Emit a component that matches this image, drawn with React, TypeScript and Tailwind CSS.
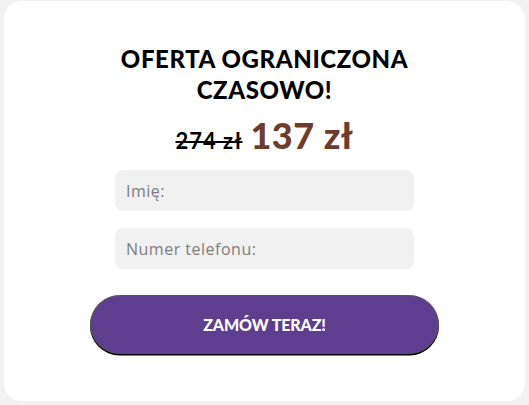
import React from 'react';

const App: React.FC = () => {
  return (
    <div className="w-[529px] h-[405px] bg-[#f2f2f2] flex flex-col" style={{ fontFamily: 'Lato, "Open Sans", sans-serif' }}>
      <div className="mx-[4px] mt-[1px] h-[400px] bg-white rounded-[18px] flex flex-col items-center">
        <h1 className="mt-[42px] w-[320px] text-center text-[24px] leading-[31px] font-black text-black tracking-[0.6px]">
          OFERTA OGRANICZONA CZASOWO!
        </h1>
        <div className="mt-[3px] flex items-baseline gap-[8px]">
          <span className="text-[22px] font-bold text-black line-through decoration-2 tracking-[1px]">274 zł</span>
          <span className="text-[36px] font-black text-[#6e3c2c] tracking-[0.5px]">137 zł</span>
        </div>
        <div className="mt-[8px] w-[299px] flex flex-col gap-[17px]">
          <input
            className="h-[41px] w-full rounded-[8px] bg-[#f1f1f1] px-[11px] text-[16px] text-[#777] placeholder:text-[#7d7d7d] outline-none tracking-[0.5px]"
            style={{ fontFamily: '"Open Sans", sans-serif' }}
            placeholder="Imię:"
          />
          <input
            className="h-[41px] w-full rounded-[8px] bg-[#f1f1f1] px-[11px] text-[16px] text-[#777] placeholder:text-[#7d7d7d] outline-none tracking-[0.5px]"
            style={{ fontFamily: '"Open Sans", sans-serif' }}
            placeholder="Numer telefonu:"
          />
        </div>
        <button className="mt-[26px] h-[59px] w-[349px] rounded-full bg-[#5e3f8f] border-[1.5px] border-[#555] shadow-[0_1.5px_0_#000] text-white text-[16px] font-black tracking-[-0.1px]">
          ZAMÓW TERAZ!
        </button>
      </div>
    </div>
  );
};

export default App;
